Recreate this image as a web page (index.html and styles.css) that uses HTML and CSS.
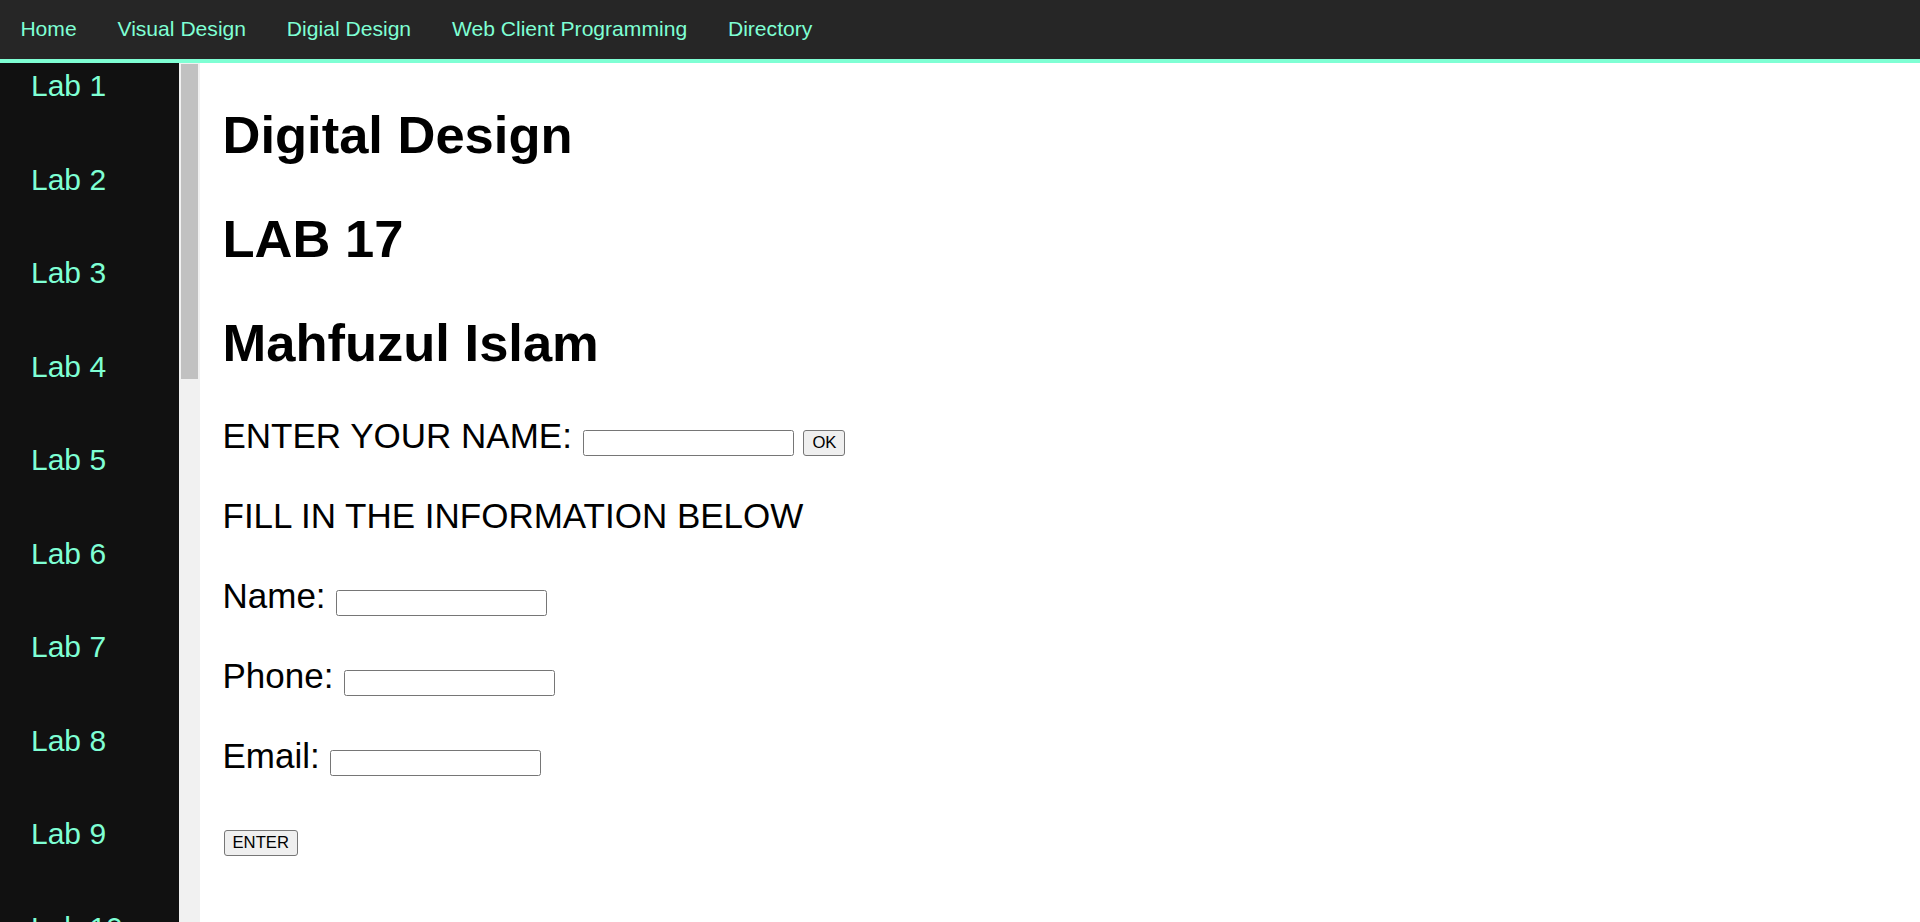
FILE: index.html
```html
<!DOCTYPE html>
<html lang="en">
<head>
<meta charset="utf-8">
<title>Digital Design - Lab 17</title>
<link rel="stylesheet" href="styles.css">
</head>
<body>
<nav class="topnav">
  <a class="navlink" href="#">Home</a>
  <a class="navlink" href="#">Visual Design</a>
  <a class="navlink" href="#">Digial Design</a>
  <a class="navlink" href="#">Web Client Programming</a>
  <a class="navlink" href="#">Directory</a>
</nav>
<div class="layout">
  <aside class="sidebar">
    <div class="labpane">
      <ul class="lablist">
        <li class="labitem"><a href="#">Lab 1</a></li>
        <li class="labitem"><a href="#">Lab 2</a></li>
        <li class="labitem"><a href="#">Lab 3</a></li>
        <li class="labitem"><a href="#">Lab 4</a></li>
        <li class="labitem"><a href="#">Lab 5</a></li>
        <li class="labitem"><a href="#">Lab 6</a></li>
        <li class="labitem"><a href="#">Lab 7</a></li>
        <li class="labitem"><a href="#">Lab 8</a></li>
        <li class="labitem"><a href="#">Lab 9</a></li>
        <li class="labitem"><a href="#">Lab 10</a></li>
      </ul>
    </div>
    <div class="scrolltrack"><div class="scrollthumb"></div></div>
  </aside>
  <main class="content">
    <h1 class="title">Digital Design</h1>
    <h1 class="title">LAB 17</h1>
    <h1 class="title">Mahfuzul Islam</h1>
    <div class="form">
      <div class="row">ENTER YOUR NAME: <input class="field" type="text"> <button class="btn btn-ok" type="button">OK</button></div>
      <div class="row">FILL IN THE INFORMATION BELOW</div>
      <div class="row">Name: <input class="field" type="text"></div>
      <div class="row">Phone: <input class="field" type="text"></div>
      <div class="row">Email: <input class="field" type="text"></div>
      <div class="row"><button class="btn btn-enter" type="button">ENTER</button></div>
    </div>
  </main>
</div>
</body>
</html>
```

FILE: styles.css
```css
html, body {
  margin: 0;
  padding: 0;
  height: 100%;
  overflow: hidden;
  background: #ffffff;
  font-family: "Liberation Sans", Arial, sans-serif;
}

.topnav {
  display: flex;
  align-items: center;
  box-sizing: border-box;
  height: 63px;
  padding: 0 0 2px 0;
  background: #262626;
  border-bottom: 4px solid #7fffd4;
}

.navlink {
  color: #7fffd4;
  text-decoration: none;
  font-size: 21.1px;
  padding: 0 20.4px;
}

.layout {
  display: flex;
  height: calc(100% - 63px);
}

.sidebar {
  display: flex;
  width: 200px;
  flex: 0 0 200px;
  height: 100%;
}

.labpane {
  width: 179px;
  height: 100%;
  background: #111111;
  overflow: hidden;
}

.scrolltrack {
  width: 21px;
  height: 100%;
  background: #f1f1f1;
}

.scrollthumb {
  height: 315px;
  margin: 1px 2px 0 2px;
  background: #c1c1c1;
}

.lablist {
  list-style: none;
  margin: 0;
  padding: 0 0 0 31px;
}

.labitem {
  box-sizing: border-box;
  height: 93.5px;
  padding-top: 6px;
  font-size: 30px;
  line-height: 34.5px;
}

.labitem a {
  color: #7fffd4;
  text-decoration: none;
}

.content {
  flex: 1;
  padding: 42.4px 0 0 22.5px;
  color: #000000;
}

.title {
  font-size: 52.5px;
  line-height: 60px;
  font-weight: bold;
  margin: 0 0 43.7px 0;
}

.form {
  display: flex;
  flex-direction: column;
  gap: 40px;
  font-size: 35px;
  line-height: 40px;
}

.row {
  height: 40px;
  white-space: nowrap;
}

.field {
  box-sizing: border-box;
  width: 211px;
  height: 26px;
  margin: 0 0 0 1px;
  padding: 0 2px;
  border: 1px solid #767676;
  border-radius: 2.5px;
  background: #ffffff;
  font-family: "Liberation Sans", Arial, sans-serif;
  font-size: 16.67px;
  vertical-align: baseline;
}

.btn {
  box-sizing: border-box;
  height: 26px;
  padding: 0 8px;
  margin: 0;
  border: 1px solid #767676;
  border-radius: 3px;
  background: #efefef;
  color: #000000;
  font-family: "Liberation Sans", Arial, sans-serif;
  font-size: 16.67px;
  line-height: 24px;
  vertical-align: baseline;
}

.btn-enter {
  margin-left: 1px;
}
```
